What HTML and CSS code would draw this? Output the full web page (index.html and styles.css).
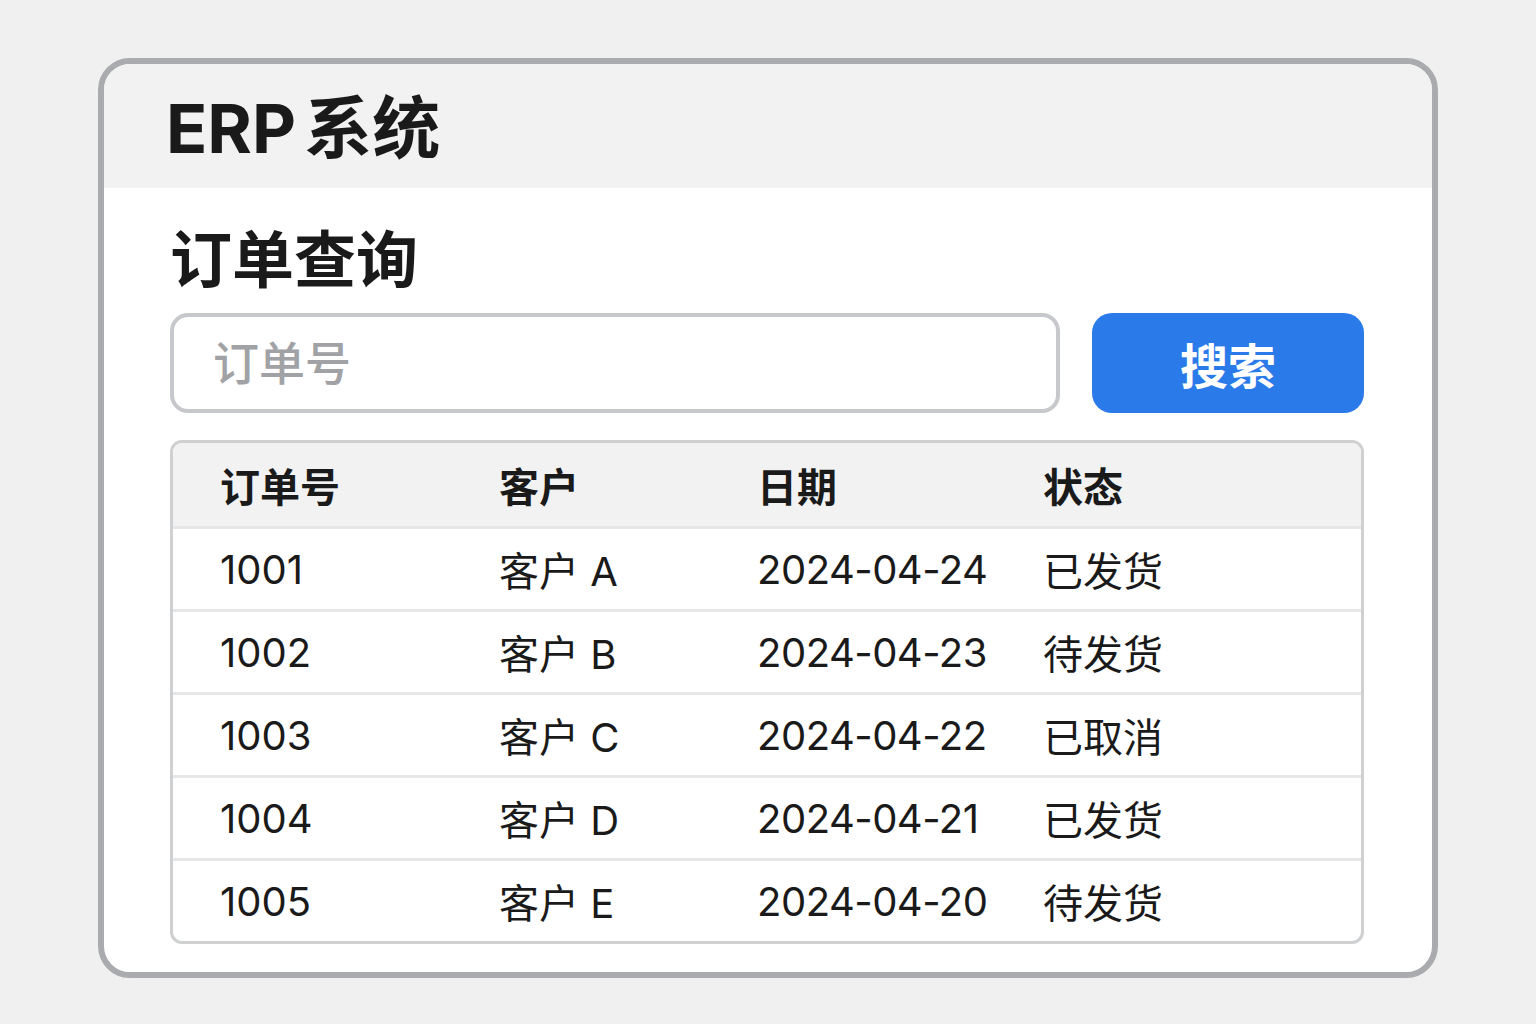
FILE: index.html
```html
<!DOCTYPE html>
<html lang="zh-CN">
<head>
<meta charset="utf-8">
<title>ERP系统</title>
<link rel="stylesheet" href="styles.css">
</head>
<body>
<div class="card">
  <header class="card-header">
    <h1 class="app-title">ERP 系统</h1>
  </header>
  <main class="card-body">
    <h2 class="section-title">订单查询</h2>
    <div class="toolbar">
      <input class="search-input" type="text" placeholder="订单号">
      <button class="search-btn">搜索</button>
    </div>
    <div class="table">
      <div class="row head">
        <div class="cell">订单号</div>
        <div class="cell">客户</div>
        <div class="cell">日期</div>
        <div class="cell">状态</div>
      </div>
      <div class="row">
        <div class="cell">1001</div>
        <div class="cell">客户 A</div>
        <div class="cell date">2024-04-24</div>
        <div class="cell">已发货</div>
      </div>
      <div class="row">
        <div class="cell">1002</div>
        <div class="cell">客户 B</div>
        <div class="cell date">2024-04-23</div>
        <div class="cell">待发货</div>
      </div>
      <div class="row">
        <div class="cell">1003</div>
        <div class="cell">客户 C</div>
        <div class="cell date">2024-04-22</div>
        <div class="cell">已取消</div>
      </div>
      <div class="row">
        <div class="cell">1004</div>
        <div class="cell">客户 D</div>
        <div class="cell date">2024-04-21</div>
        <div class="cell">已发货</div>
      </div>
      <div class="row last">
        <div class="cell">1005</div>
        <div class="cell">客户 E</div>
        <div class="cell date">2024-04-20</div>
        <div class="cell">待发货</div>
      </div>
    </div>
  </main>
</div>
</body>
</html>
```

FILE: styles.css
```css
* { box-sizing: border-box; }
html, body { margin: 0; padding: 0; }
body {
  background: #f0f0f0;
  font-family: "Inter", "Noto Sans CJK SC", sans-serif;
  color: #1a1a1a;
  height: 1024px;
  padding-top: 58px;
}
.card {
  margin: 0 98px;
  height: 920px;
  border: 6px solid #a9abae;
  border-radius: 32px;
  background: #fff;
  overflow: hidden;
}
.card-header {
  height: 124px;
  background: #f2f2f2;
  padding-left: 62px;
  display: flex;
  align-items: center;
}
.app-title {
  margin: 0;
  font-size: 68px;
  font-weight: 700;
  line-height: 1;
  color: #1a1a1a;
  word-spacing: -8px;
  padding-top: 4px;
}
.card-body {
  padding: 35px 68px 0 66px;
}
.section-title {
  margin: 0;
  font-size: 62px;
  font-weight: 700;
  line-height: 76px;
  color: #1a1a1a;
}
.toolbar {
  display: flex;
  gap: 32px;
  margin-top: 14px;
  height: 100px;
}
.search-input {
  width: 890px;
  height: 100px;
  border: 4px solid #c6c8cb;
  border-radius: 18px;
  background: #fff;
  padding: 0 0 0 39px;
  font-family: inherit;
  font-size: 46px;
  font-weight: 500;
  color: #333;
  outline: none;
}
.search-input::placeholder { color: #a0a2a5; }
.search-btn {
  flex: 1;
  height: 100px;
  border: none;
  border-radius: 20px;
  background: #2a7ae9;
  color: #fff;
  font-family: inherit;
  font-size: 48px;
  font-weight: 700;
  padding: 0;
}
.table {
  margin-top: 27px;
  border: 3px solid #cfd0d2;
  border-radius: 12px;
  overflow: hidden;
}
.row {
  display: grid;
  grid-template-columns: 279px 258px 286px 1fr;
  padding-left: 47px;
  height: 83px;
  align-items: center;
  border-top: 3px solid #e6e7e8;
  font-size: 40px;
  color: #1a1a1a;
}
.row.head {
  border-top: none;
  background: #f2f2f2;
  font-weight: 700;
  font-size: 40px;
}
.row.last { height: 83px; }
.cell { white-space: nowrap; }
.cell.date { letter-spacing: -0.5px; }
```
